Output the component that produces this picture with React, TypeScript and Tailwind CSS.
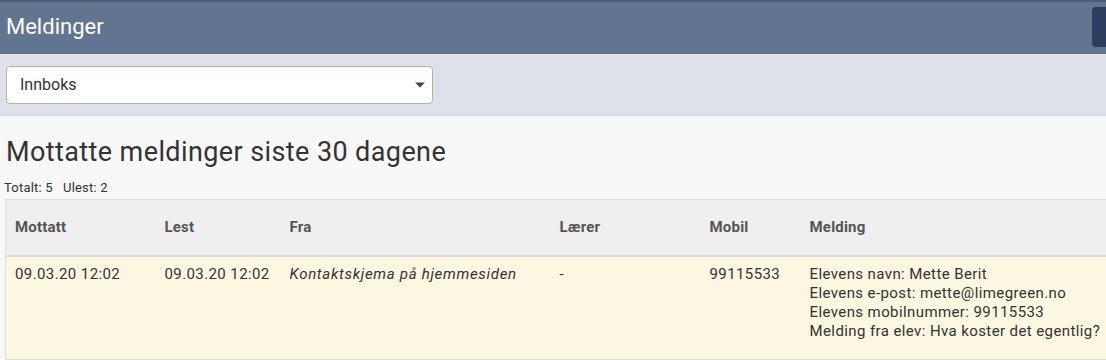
const rows = [
  {
    mottatt: "09.03.20 12:02",
    lest: "09.03.20 12:02",
    fra: "Kontaktskjema på hjemmesiden",
    laerer: "-",
    mobil: "99115533",
    melding: [
      "Elevens navn: Mette Berit",
      "Elevens e-post: mette@limegreen.no",
      "Elevens mobilnummer: 99115533",
      "Melding fra elev: Hva koster det egentlig?",
    ],
  },
];

const App = () => {
  return (
    <div className="w-[1106px] h-[360px] overflow-hidden bg-[#f8f8f8] font-['Roboto',sans-serif] text-[#333]">
      {/* header */}
      <div className="h-[54px] bg-[#617590] border-t-2 border-[#4b5b73] flex items-center justify-between pl-[6px]">
        <h1 className="text-[22px] text-white leading-none pb-[3px]">Meldinger</h1>
        <div className="w-[14px] h-[40px] bg-[#2b3c5f] rounded-l-[4px] -mt-[2px]" />
      </div>

      {/* filter */}
      <div className="h-[62px] bg-[#dee1e9] border-b border-[#d4d7de] px-[6px] pt-[12px]">
        <div className="w-[427px] h-[38px] bg-white border border-[#b0b0b0] rounded-[4px] flex items-center justify-between pl-[13px] pr-[6px]">
          <span className="text-[16px] text-[#333]">Innboks</span>
          <svg width="12" height="8" viewBox="0 0 12 8">
            <path d="M1 1.5h10L6 6.5z" fill="#444" />
          </svg>
        </div>
      </div>

      {/* content */}
      <div className="pl-[6px] pt-[19px]">
        <h2 className="text-[27px] leading-[34px] tracking-[0.4px] text-[#333]">
          Mottatte meldinger siste 30 dagene
        </h2>
        <div className="text-[13px] leading-[16px] tracking-[0.2px] mt-[11px] -ml-[2px] text-[#333]">
          Totalt: 5&nbsp;&nbsp; Ulest: 2
        </div>
        <table className="mt-[3px] -ml-[1px] w-[1110px] border-collapse text-[15px] tracking-[0.4px] text-[#333]">
          <thead>
            <tr className="bg-[#efefef] h-[56px] text-[#555] tracking-[0.2px] border-t border-l border-[#dcdcdc] border-b-2 border-b-[#dadada]">
              <th className="w-[150px] text-left font-bold pl-[9px]">Mottatt</th>
              <th className="w-[125px] text-left font-bold pl-[9px]">Lest</th>
              <th className="w-[270px] text-left font-bold pl-[9px]">Fra</th>
              <th className="w-[150px] text-left font-bold pl-[9px]">Lærer</th>
              <th className="w-[100px] text-left font-bold pl-[9px]">Mobil</th>
              <th className="text-left font-bold pl-[9px]">Melding</th>
            </tr>
          </thead>
          <tbody>
            {rows.map((r, i) => (
              <tr key={i} className="bg-[#fcf7e1] border-l border-b border-[#dcdcdc] align-top leading-[19px]">
                <td className="pl-[9px] pt-[8px] pb-[18px]">{r.mottatt}</td>
                <td className="pl-[9px] pt-[8px]">{r.lest}</td>
                <td className="pl-[9px] pt-[8px] italic tracking-[0.7px]">{r.fra}</td>
                <td className="pl-[9px] pt-[8px]">{r.laerer}</td>
                <td className="pl-[9px] pt-[8px]">{r.mobil}</td>
                <td className="pl-[9px] pt-[8px] pb-[18px] whitespace-nowrap">
                  {r.melding.map((m) => (
                    <div key={m}>{m}</div>
                  ))}
                </td>
              </tr>
            ))}
          </tbody>
        </table>
      </div>
    </div>
  );
};

export default App;
